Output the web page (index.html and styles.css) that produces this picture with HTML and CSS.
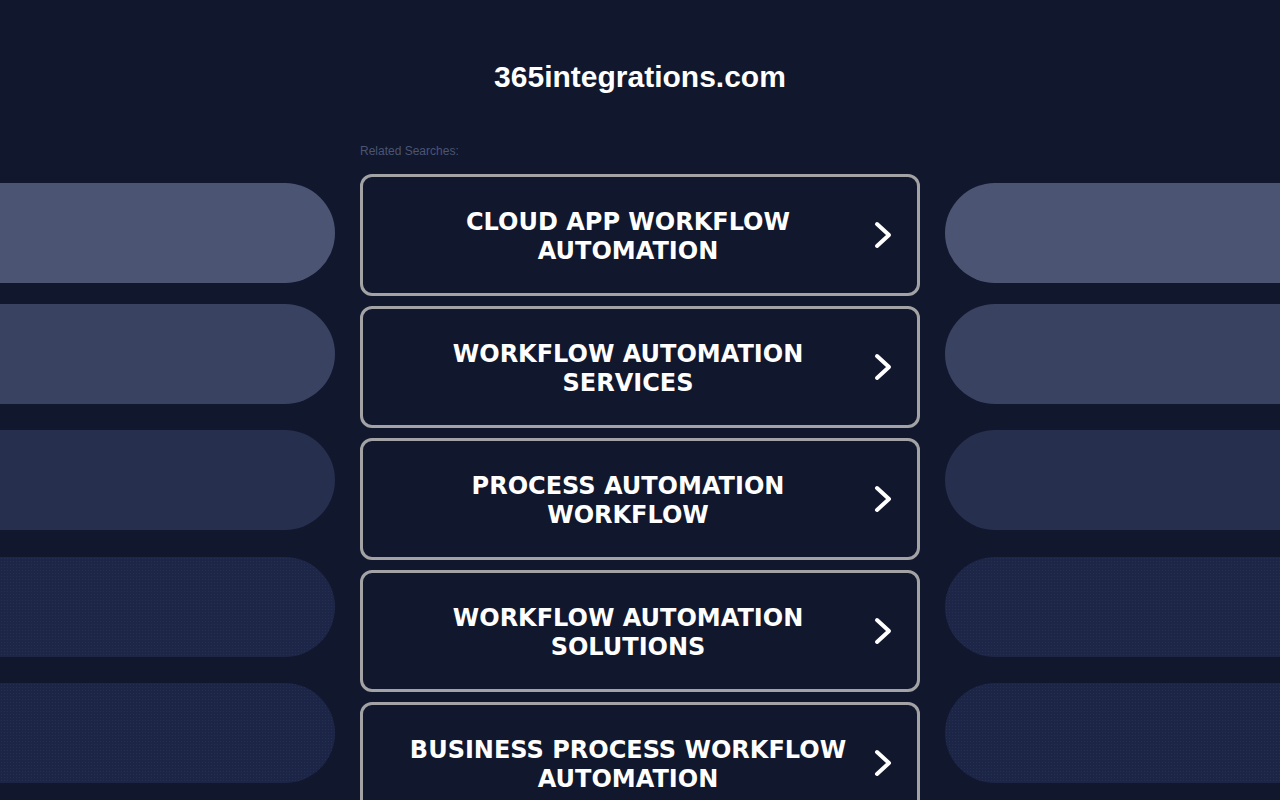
FILE: index.html
```html
<!DOCTYPE html>
<html lang="en">
<head>
<meta charset="utf-8">
<title>365integrations.com</title>
<link rel="stylesheet" href="styles.css">
</head>
<body>
<div class="page">
  <div class="side side-left">
    <div class="pill p1"></div>
    <div class="pill p2"></div>
    <div class="pill p3"></div>
    <div class="pill p4"></div>
    <div class="pill p5"></div>
  </div>
  <main class="center">
    <h1 class="domain">365integrations.com</h1>
    <div class="related">Related Searches:</div>
    <div class="links">
      <a class="link" href="#"><span class="label">CLOUD APP WORKFLOW AUTOMATION</span><svg class="chev" viewBox="0 0 20 28" width="20" height="28"><path d="M4 3 L16 14 L4 25" fill="none" stroke="#fff" stroke-width="4" stroke-linecap="round" stroke-linejoin="round"/></svg></a>
      <a class="link" href="#"><span class="label">WORKFLOW AUTOMATION SERVICES</span><svg class="chev" viewBox="0 0 20 28" width="20" height="28"><path d="M4 3 L16 14 L4 25" fill="none" stroke="#fff" stroke-width="4" stroke-linecap="round" stroke-linejoin="round"/></svg></a>
      <a class="link" href="#"><span class="label">PROCESS AUTOMATION WORKFLOW</span><svg class="chev" viewBox="0 0 20 28" width="20" height="28"><path d="M4 3 L16 14 L4 25" fill="none" stroke="#fff" stroke-width="4" stroke-linecap="round" stroke-linejoin="round"/></svg></a>
      <a class="link" href="#"><span class="label">WORKFLOW AUTOMATION SOLUTIONS</span><svg class="chev" viewBox="0 0 20 28" width="20" height="28"><path d="M4 3 L16 14 L4 25" fill="none" stroke="#fff" stroke-width="4" stroke-linecap="round" stroke-linejoin="round"/></svg></a>
      <a class="link" href="#"><span class="label">BUSINESS PROCESS WORKFLOW AUTOMATION</span><svg class="chev" viewBox="0 0 20 28" width="20" height="28"><path d="M4 3 L16 14 L4 25" fill="none" stroke="#fff" stroke-width="4" stroke-linecap="round" stroke-linejoin="round"/></svg></a>
    </div>
  </main>
  <div class="side side-right">
    <div class="pill p1"></div>
    <div class="pill p2"></div>
    <div class="pill p3"></div>
    <div class="pill p4"></div>
    <div class="pill p5"></div>
  </div>
</div>
</body>
</html>
```
FILE: styles.css
```css
html, body {
  margin: 0;
  padding: 0;
  background: #11172d;
  height: 100%;
  overflow: hidden;
}
.page {
  display: grid;
  grid-template-columns: 360px 560px 360px;
  width: 1280px;
}
.side {
  display: flex;
  flex-direction: column;
  padding-top: 183px;
}
.side-left { padding-right: 25px; }
.side-right { padding-left: 25px; }
.pill {
  height: 100px;
  flex: none;
}
.side-left .pill { border-radius: 0 50px 50px 0; }
.side-right .pill { border-radius: 50px 0 0 50px; }
.p1 { background: #4b5573; }
.p2 { background: #3a4262; margin-top: 21px; }
.p3 { background: #262f4e; margin-top: 26px; }
.p4 { background: #1d2646; margin-top: 27px; }
.p5 { background: #1c2546; margin-top: 26px; }
.p4, .p5 {
  background-image: radial-gradient(circle, rgba(40,52,90,0.7) 0.6px, transparent 0.9px);
  background-size: 3px 3px;
}
.center {
  display: flex;
  flex-direction: column;
}
.domain {
  margin: 58px 0 0;
  height: 38px;
  font-family: "Liberation Sans", Arial, sans-serif;
  font-weight: bold;
  font-size: 30px;
  line-height: 38px;
  color: #fff;
  text-align: center;
}
.related {
  margin-top: 48px;
  font-family: "Liberation Sans", Arial, sans-serif;
  font-size: 12px;
  line-height: 14px;
  color: #4a5573;
}
.links {
  margin-top: 16px;
  display: flex;
  flex-direction: column;
  gap: 10px;
}
.link {
  box-sizing: border-box;
  height: 122px;
  border: 3px solid #a3a3a5;
  border-radius: 12px;
  display: flex;
  align-items: center;
  padding: 0 24px 0 20px;
  text-decoration: none;
  color: #fff;
}
.label {
  flex: 1;
  text-align: center;
  font-family: "DejaVu Sans", Verdana, sans-serif;
  font-weight: bold;
  font-size: 24px;
  line-height: 29px;
  padding: 4px 14px 0;
}
.chev {
  flex: none;
  display: block;
}
```
